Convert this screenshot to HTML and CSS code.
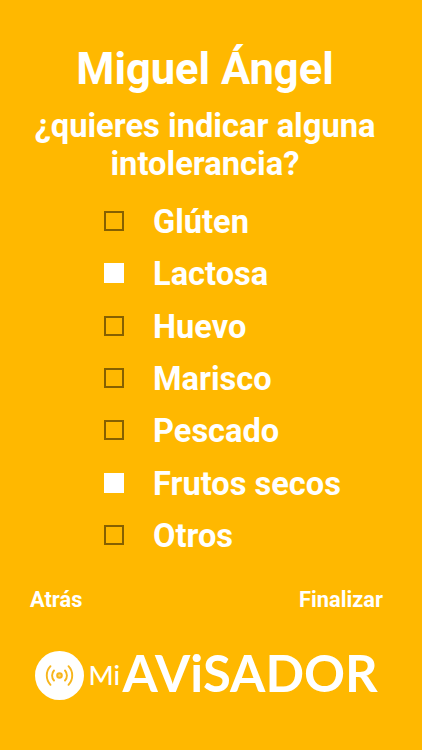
FILE: index.html
```html
<!DOCTYPE html>
<html lang="es">
    <head>
        <meta charset="UTF-8">
        <meta name="viewport" content="width=device-width, initial-scale=1.0">
        <title>Mi Avisador - Intolerancias</title>
        <link rel="stylesheet" href="styles.css">
    </head>
    <body>
        <h1>Miguel Ángel</h1>
        <h2>¿quieres indicar alguna<br>intolerancia?</h2>

        <form class="options">
            <label class="option"><input type="checkbox"><span>Glúten</span></label>
            <label class="option"><input type="checkbox" checked><span>Lactosa</span></label>
            <label class="option"><input type="checkbox"><span>Huevo</span></label>
            <label class="option"><input type="checkbox"><span>Marisco</span></label>
            <label class="option"><input type="checkbox"><span>Pescado</span></label>
            <label class="option"><input type="checkbox" checked><span>Frutos secos</span></label>
            <label class="option"><input type="checkbox"><span>Otros</span></label>
        </form>

        <div class="nav">
            <a href="#">Atrás</a>
            <a href="#">Finalizar</a>
        </div>

        <div class="logo">
            <svg class="logo-icon" viewBox="0 0 49 49">
                <circle cx="24.500" cy="24.500" r="24.500" fill="#fff"/>
                <circle cx="24.500" cy="24.500" r="2.300" fill="#fbd98a" stroke="#f7b51c" stroke-width="2"/>
                <g fill="none" stroke="#f7b51c" stroke-width="1.900" stroke-linecap="round">
                    <path d="M19 19.500a7.500 7.500 0 0 0 0 10M30 19.500a7.500 7.500 0 0 1 0 10"/>
                    <path d="M15.500 15.200a13.500 13.500 0 0 0 0 18.600M33.500 15.200a13.500 13.500 0 0 1 0 18.600"/>
                </g>
            </svg>
            <span class="logo-mi">Mi</span>
            <span class="logo-name">AViSADOR</span>
        </div>
    </body>
</html>
```

FILE: styles.css
```css
/* General Styles */
body {
    margin: 0;
    height: 750px;
    overflow: hidden;
    background-color: #ffb800;
    color: white;
    font-family: Roboto, sans-serif;
    font-weight: bold;
}

h1 {
    margin: 0;
    padding: 43px 12px 0 0;
    font-size: 43.5px;
    line-height: 54px;
    text-align: center;
}

h2 {
    margin: 0;
    padding: 10px 12px 0 0;
    font-size: 32.7px;
    line-height: 38px;
    text-align: center;
}

/* Checkbox list */
.options {
    padding: 12px 0 0 104px;
}

.option {
    display: flex;
    align-items: center;
    gap: 29px;
    height: 52.3px;
    font-size: 32.6px;
}

.option span {
    padding-top: 2px;
}

.option input {
    appearance: none;
    box-sizing: border-box;
    width: 20px;
    height: 20px;
    margin: 0;
    border: 2px solid #866000;
}

.option input:checked {
    border-color: white;
    background-color: white;
}

/* Bottom links */
.nav {
    display: flex;
    justify-content: space-between;
    padding: 26px 39px 0 30px;
    font-size: 21.8px;
    line-height: 26px;
}

.nav a {
    color: white;
    text-decoration: none;
}

.logo {
    display: flex;
    align-items: center;
    height: 49px;
    padding: 38px 0 0 34.5px;
    font-family: Lato, sans-serif;
    line-height: 49px;
}

.logo-icon {
    width: 49px;
    height: 49px;
}

.logo-mi {
    margin-left: 5px;
    padding-bottom: 3px;
    font-size: 27px;
    font-weight: 500;
}

.logo-name {
    margin-left: 2.5px;
    padding-bottom: 6px;
    font-size: 50.8px;
}
```
